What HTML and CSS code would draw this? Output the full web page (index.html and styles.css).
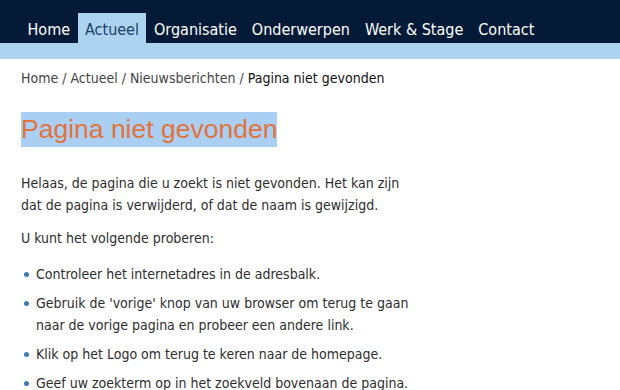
FILE: index.html
```html
<!DOCTYPE html>
<html lang="nl">
<head>
    <meta charset="UTF-8">
    <meta name="viewport" content="width=device-width, initial-scale=1.0">
    <title>Pagina niet gevonden</title>
    <link rel="stylesheet" href="styles.css">
</head>
<body>
    <div class="topbar">
        <ul class="menu">
            <li><a href="#">Home</a></li>
            <li class="active"><a href="#">Actueel</a></li>
            <li><a href="#">Organisatie</a></li>
            <li><a href="#">Onderwerpen</a></li>
            <li><a href="#">Werk &amp; Stage</a></li>
            <li><a href="#">Contact</a></li>
        </ul>
    </div>
    <div class="subbar"></div>

    <div class="content">
        <div class="crumbs">
            <a href="#">Home</a> / <a href="#">Actueel</a> / <a href="#">Nieuwsberichten</a> / <span class="current">Pagina niet gevonden</span>
        </div>

        <h1><span class="marked">Pagina niet gevonden</span></h1>

        <p>Helaas, de pagina die u zoekt is niet gevonden. Het kan zijn dat de pagina is verwijderd, of dat de naam is gewijzigd.</p>
        <p>U kunt het volgende proberen:</p>
        <ul class="tips">
            <li>Controleer het internetadres in de adresbalk.</li>
            <li>Gebruik de 'vorige' knop van uw browser om terug te gaan naar de vorige pagina en probeer een andere link.</li>
            <li>Klik op het Logo om terug te keren naar de homepage.</li>
            <li>Geef uw zoekterm op in het zoekveld bovenaan de pagina.</li>
        </ul>
    </div>
</body>
</html>
```

FILE: styles.css
```css
body {
    margin: 0;
    font-family: "DejaVu Sans Condensed", Tahoma, sans-serif;
    color: #2e2e2e;
    background: #fff;
}
.topbar {
    background-color: #041a36;
    height: 43px;
    display: flex;
    align-items: flex-end;
}
.menu {
    list-style: none;
    margin: 0;
    padding: 0 0 0 20px;
    display: flex;
}
.menu li a {
    display: block;
    height: 26px;
    padding: 4px 7.5px 0;
    line-height: 26px;
    font-size: 16px;
    color: #fff;
    text-decoration: none;
}
.menu li.active a {
    background-color: #acd4f1;
    color: #1d3f66;
}
.subbar {
    height: 16px;
    background-color: #acd4f1;
}
.content {
    padding: 9px 21px 0;
    width: 400px;
}
.crumbs {
    font-size: 14px;
    line-height: 20px;
    color: #444;
}
.crumbs a {
    color: #444;
    text-decoration: none;
}
.crumbs .current {
    color: #111;
}
h1 {
    margin: 24px 0 26px;
    font-family: "Liberation Sans", Arial, sans-serif;
    font-weight: normal;
    font-size: 26.5px;
    line-height: 34px;
    color: #e2733a;
}
.marked {
    background-color: #abcff2;
    padding: 2px 0 3px;
}
p {
    margin: 0 0 11px;
    font-size: 14px;
    line-height: 22px;
}
.tips {
    margin: 0;
    padding: 3px 0 0 15px;
    list-style: none;
    font-size: 14px;
    line-height: 22px;
}
.tips li {
    position: relative;
    margin-bottom: 7px;
}
.tips li::before {
    content: "";
    position: absolute;
    left: -12px;
    top: 9px;
    width: 5px;
    height: 5px;
    border-radius: 50%;
    background-color: #3b7db9;
}
```
